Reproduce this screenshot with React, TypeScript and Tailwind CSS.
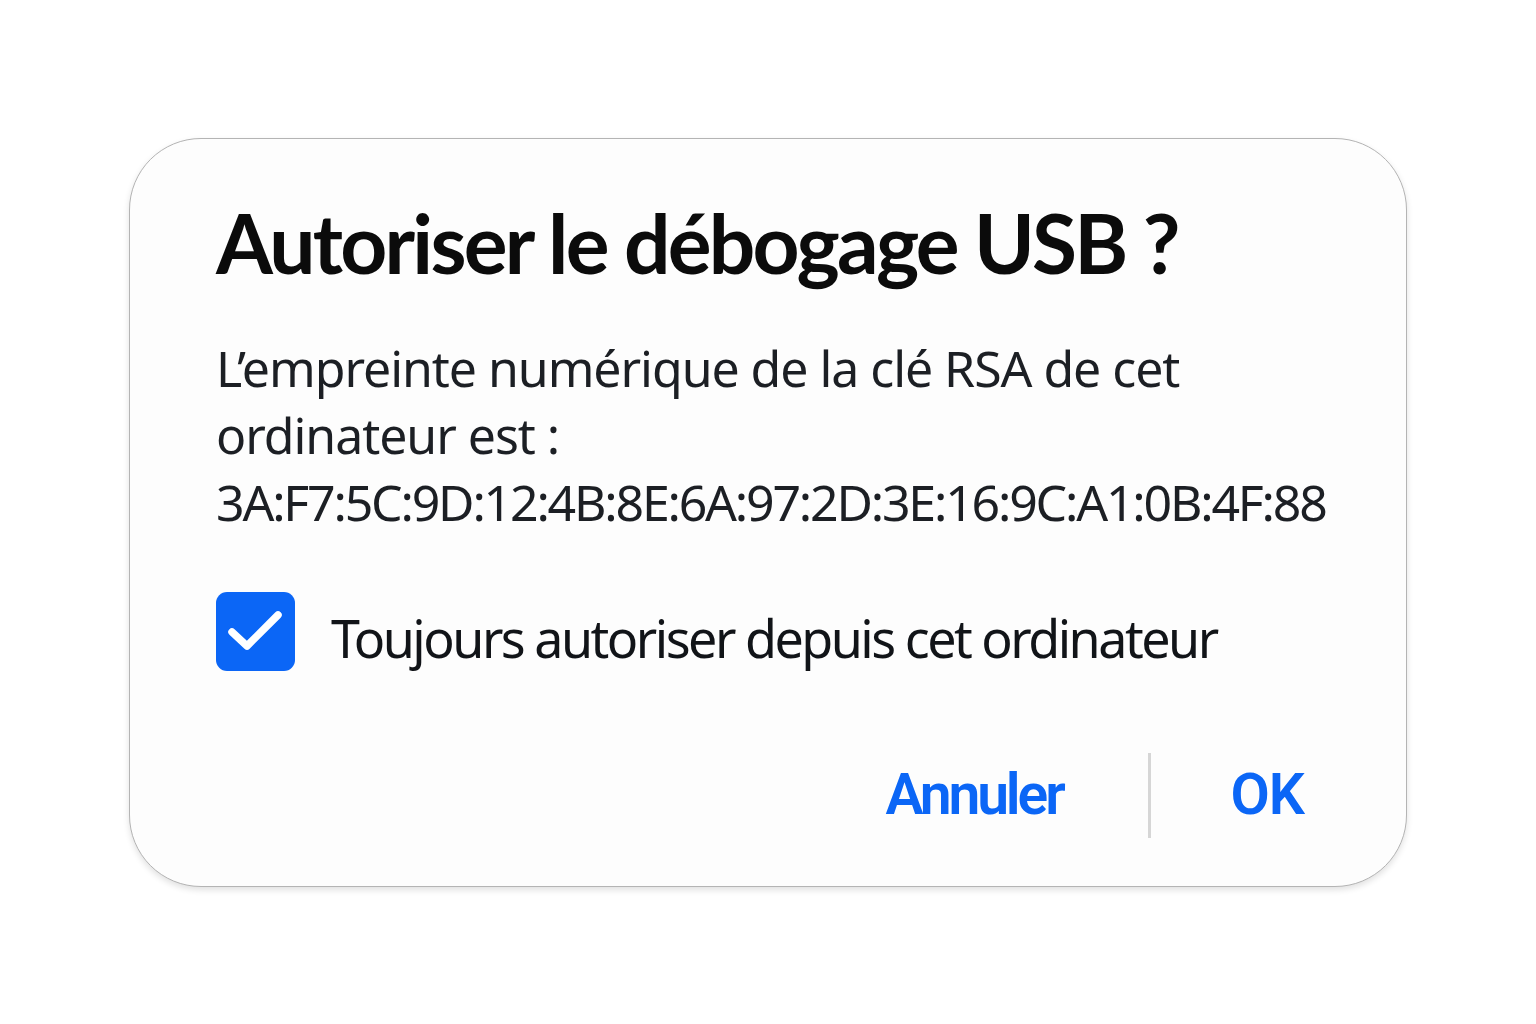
import React from "react";

export default function App() {
  return (
    <div className="flex h-[1024px] w-full items-center justify-center bg-white">
      <div className="flex h-[749px] w-[1278px] flex-col rounded-[72px] border border-[#b4b4b4] bg-[#fdfdfd] pl-[86px] pr-[60px] pt-[53px] shadow-[0_3px_6px_rgba(0,0,0,0.12)]">
        <h1 className="font-['Lato',sans-serif] text-[82px] font-bold leading-[100px] tracking-[-2.75px] text-[#0b0b0b]">
          Autoriser le débogage USB ?
        </h1>
        <p className="mt-[43px] font-['Noto_Sans',sans-serif] text-[50px] leading-[67px] tracking-[-1.05px] text-[#1c1f24]">
          L’empreinte numérique de la clé RSA de cet
          <br />
          ordinateur est :
          <br />
          <span className="tracking-[-2.2px]">3A:F7:5C:9D:12:4B:8E:6A:97:2D:3E:16:9C:A1:0B:4F:88</span>
        </p>
        <div className="mt-[56px] flex items-start gap-[36px]">
          <div className="h-[79px] w-[79px] shrink-0 rounded-[11px] bg-[#0b66f6]">
            <svg width="79" height="79" viewBox="0 0 79 79" fill="none">
              <path d="M16 40 L31 54 L62 23" stroke="white" strokeWidth="7.5" strokeLinecap="round" strokeLinejoin="round" />
            </svg>
          </div>
          <span className="mt-[13px] font-['Noto_Sans',sans-serif] text-[52px] leading-[66px] tracking-[-2.5px] text-[#111418]">
            Toujours autoriser depuis cet ordinateur
          </span>
        </div>
        <div className="mt-[82px] flex items-center justify-end">
          <button className="font-['Roboto',sans-serif] text-[57px] font-semibold leading-[66px] tracking-[-3.1px] text-[#0b66f6]">
            Annuler
          </button>
          <div className="ml-[85px] mr-[80px] h-[85px] w-[3px] bg-[#d6d6d6]" />
          <button className="mr-[42px] font-['Roboto',sans-serif] text-[57px] font-semibold leading-[66px] tracking-[-1px] text-[#0b66f6]">
            OK
          </button>
        </div>
      </div>
    </div>
  );
}
